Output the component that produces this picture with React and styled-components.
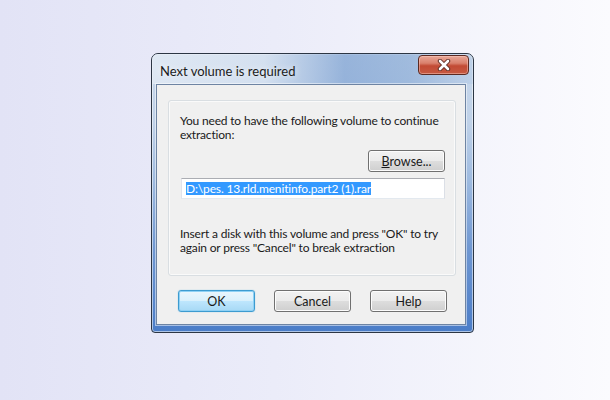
import React from "react";
import styled, { createGlobalStyle } from "styled-components";

const GlobalStyle = createGlobalStyle`
  html, body {
    margin: 0;
    padding: 0;
    height: 100%;
  }
  body {
    font-family: Lato, "Open Sans", sans-serif;
  }
`;

const PageSC = styled.div`
  width: 610px;
  height: 400px;
  box-sizing: border-box;
  padding: 53px 0 0 151px;
  background: linear-gradient(to right, #e2e3f6 0%, #ebecf9 45%, #fbfbfe 100%);
`;

const WindowSC = styled.div`
  display: flex;
  flex-direction: column;
  box-sizing: border-box;
  width: 323px;
  height: 280px;
  padding: 0 7px 7px 4px;
  border: 1px solid #2c3644;
  border-radius: 7px 7px 4px 4px;
  background: linear-gradient(
    to bottom,
    #c9d8eb 0%,
    #bfd1e8 25%,
    #9fbbe0 45%,
    #6f97d2 70%,
    #4b7dc8 100%
  );
  box-shadow: inset 0 0 0 1px rgba(255, 255, 255, 0.55);
`;

const TitleBarSC = styled.div`
  display: flex;
  justify-content: space-between;
  align-items: flex-start;
  height: 30px;
  margin: 0 -7px 0 -4px;
  padding: 0 4px 0 8px;
  border-radius: 6px 6px 0 0;
  background: linear-gradient(
    to right,
    rgba(230, 237, 246, 0.75) 0%,
    rgba(220, 230, 243, 0.6) 35%,
    rgba(110, 150, 205, 0.55) 60%,
    rgba(120, 158, 208, 0.5) 80%,
    rgba(170, 196, 228, 0.3) 100%
  );
`;

const TitleSC = styled.span`
  margin-top: 9px;
  font-size: 13px;
  color: #1b1b1b;
  text-shadow: 0 0 6px rgba(255, 255, 255, 0.9);
`;

const CloseButtonSC = styled.div`
  display: flex;
  align-items: center;
  justify-content: center;
  width: 51px;
  height: 20px;
  margin-top: 1px;
  box-sizing: border-box;
  border: 1px solid #5b2a22;
  border-radius: 4px;
  background: linear-gradient(
    to bottom,
    #e9a899 0%,
    #d9806c 40%,
    #c24a34 55%,
    #c65a43 100%
  );
  box-shadow: inset 0 0 0 1px rgba(255, 210, 200, 0.45);
`;

const ClientSC = styled.div`
  display: flex;
  flex-direction: column;
  flex: 1;
  box-sizing: border-box;
  padding: 15px 9px 0 11px;
  background: #f0f0f0;
  border: 1px solid #6e84a3;
  box-shadow: 0 0 0 1px rgba(255, 255, 255, 0.5);
`;

const GroupBoxSC = styled.div`
  display: flex;
  flex-direction: column;
  box-sizing: border-box;
  height: 176px;
  padding: 13px 10px 0 11px;
  border: 1px solid #d9dee2;
  border-radius: 3px;
  box-shadow: inset 0 0 0 1px #fafafa;
`;

const TextSC = styled.p`
  margin: ${(p) => p.$margin || "0"};
  font-size: 12px;
  line-height: 14px;
  letter-spacing: -0.18px;
  color: #1a1a1a;
`;

const BrowseRowSC = styled.div`
  display: flex;
  justify-content: flex-end;
  margin-top: 8px;
`;

const ButtonSC = styled.button`
  display: flex;
  align-items: center;
  justify-content: center;
  width: 77px;
  height: 22px;
  padding: 0;
  box-sizing: border-box;
  font-family: Lato, "Open Sans", sans-serif;
  font-size: 12.5px;
  color: #1a1a1a;
  border: 1px solid ${(p) => (p.$default ? "#3d9bd0" : "#707070")};
  border-radius: 3px;
  background: ${(p) =>
    p.$default
      ? "linear-gradient(to bottom, #eaf6fd 0%, #d9f0fc 50%, #bee6fd 51%, #a7d9f5 100%)"
      : "linear-gradient(to bottom, #f2f2f2 0%, #ebebeb 50%, #dddddd 51%, #cfcfcf 100%)"};
  box-shadow: ${(p) =>
    p.$default
      ? "inset 0 0 0 1px #8fd1f5, 0 0 1px #5ab2e0"
      : "inset 0 0 0 1px #fcfcfc"};
  outline: none;
`;

const UnderSC = styled.span`
  text-decoration: underline;
`;

const InputSC = styled.div`
  display: flex;
  align-items: center;
  box-sizing: border-box;
  height: 21px;
  margin: 6px 0 0 1px;
  padding: 0 0 0 4px;
  overflow: hidden;
  background: #ffffff;
  border: 1px solid #abadb3;
  border-color: #abadb3 #dbdfe6 #e3e9ef #e2e3ea;
`;

const SelectedSC = styled.span`
  display: inline-block;
  height: 13px;
  line-height: 13px;
  font-size: 12px;
  letter-spacing: -0.15px;
  color: #ffffff;
  background: #3399ff;
  white-space: nowrap;
`;

const ButtonRowSC = styled.div`
  display: flex;
  gap: 19px;
  margin: 14px 0 0 10px;
`;

const CloseIcon = () => (
  <svg width="14" height="12" viewBox="0 0 14 12">
    <path
      d="M3 2 L11 10 M11 2 L3 10"
      stroke="#5a2a22"
      strokeWidth="4.4"
      strokeLinecap="round"
    />
    <path
      d="M3 2 L11 10 M11 2 L3 10"
      stroke="#ffffff"
      strokeWidth="2.6"
      strokeLinecap="round"
    />
  </svg>
);

export default function App() {
  return (
    <PageSC>
      <GlobalStyle />
      <WindowSC>
        <TitleBarSC>
          <TitleSC>Next volume is required</TitleSC>
          <CloseButtonSC>
            <CloseIcon />
          </CloseButtonSC>
        </TitleBarSC>
        <ClientSC>
          <GroupBoxSC>
            <TextSC>
              You need to have the following volume to continue extraction:
            </TextSC>
            <BrowseRowSC>
              <ButtonSC>
                <UnderSC>B</UnderSC>rowse...
              </ButtonSC>
            </BrowseRowSC>
            <InputSC>
              <SelectedSC>D:\pes. 13.rld.menitinfo.part2 (1).rar</SelectedSC>
            </InputSC>
            <TextSC $margin="28px 0 0 0">
              Insert a disk with this volume and press "OK" to try again or
              press "Cancel" to break extraction
            </TextSC>
          </GroupBoxSC>
          <ButtonRowSC>
            <ButtonSC $default>OK</ButtonSC>
            <ButtonSC>Cancel</ButtonSC>
            <ButtonSC>Help</ButtonSC>
          </ButtonRowSC>
        </ClientSC>
      </WindowSC>
    </PageSC>
  );
}
